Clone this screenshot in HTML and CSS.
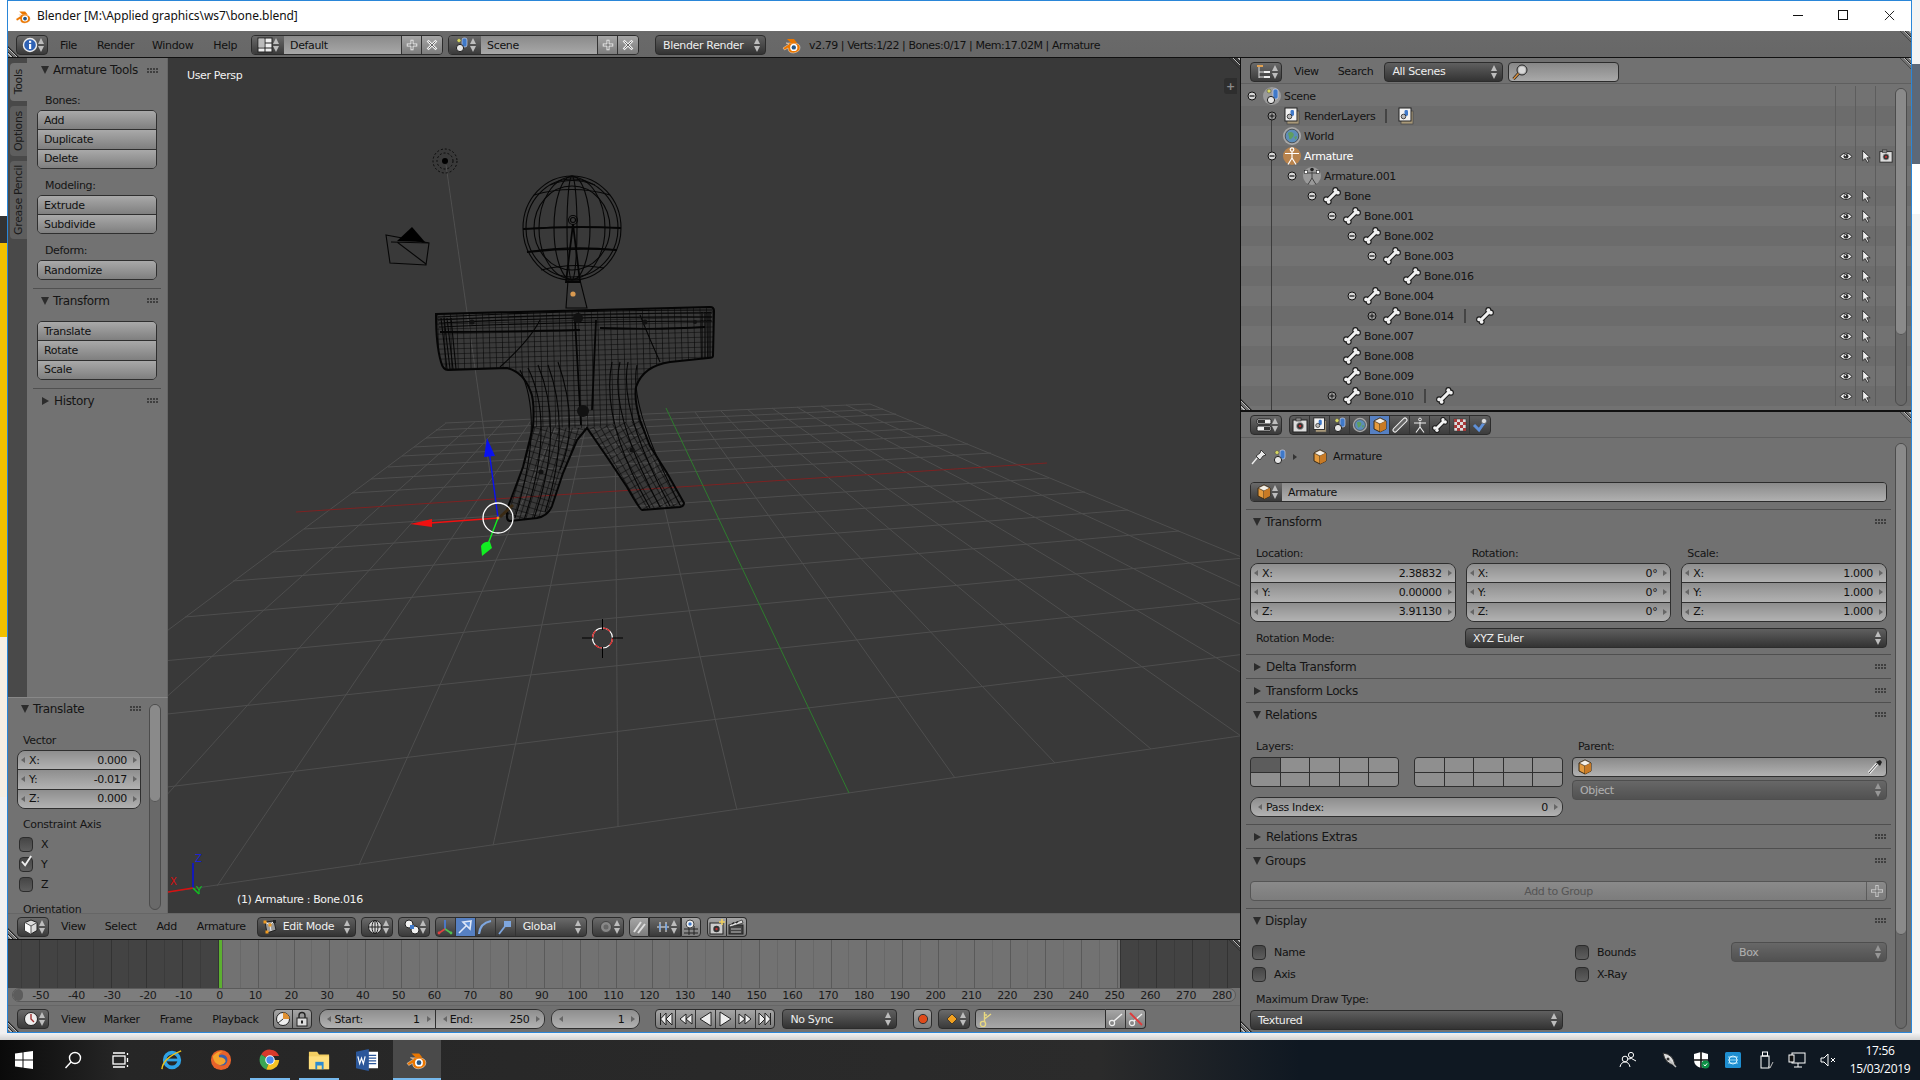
FILE: index.html
```html
<!DOCTYPE html>
<html lang="en">
<head>
<meta charset="utf-8">
<title>Blender</title>
<link rel="stylesheet" href="styles.css">
</head>
<body>
<svg class="defs" width="0" height="0" aria-hidden="true">
<defs>
<symbol id="i-info" viewBox="0 0 16 16"><circle cx="8" cy="8" r="6.5" fill="#2f62b5" stroke="#eee" stroke-width="1.4"/><rect x="7" y="7" width="2.2" height="5" fill="#fff"/><rect x="7" y="3.8" width="2.2" height="2" fill="#fff"/></symbol>
<symbol id="i-layout" viewBox="0 0 16 16"><rect x="1" y="1" width="14" height="14" fill="#eee" stroke="#222"/><path d="M8 1V15M1 11H8M8 6H15M8 11H15" stroke="#222" fill="none"/><rect x="2" y="2" width="5" height="8" fill="#bbb"/></symbol>
<symbol id="i-scene" viewBox="0 0 16 16"><rect x="8" y="1" width="5" height="9" rx="2" fill="#3f79c9" stroke="#dde" stroke-width=".6"/><circle cx="6" cy="11" r="3.6" fill="#e6e6e6" stroke="#222"/><circle cx="5" cy="3.5" r="2" fill="#d8d860" stroke="#444" stroke-width=".5"/></symbol>
<symbol id="i-scene-bg" viewBox="0 0 18 20"><circle cx="9" cy="10" r="9" fill="#9a9a9a"/><rect x="10" y="3" width="5" height="10" rx="2" fill="#3f79c9" stroke="#dde" stroke-width=".6"/><circle cx="8" cy="14" r="3.6" fill="#e6e6e6" stroke="#222"/><circle cx="6" cy="5" r="2" fill="#d8d860" stroke="#444" stroke-width=".5"/></symbol>
<symbol id="i-outliner" viewBox="0 0 16 16"><rect x="1" y="1" width="6" height="2" fill="#e0a050"/><path d="M3 3V14M3 8H8M3 13H8" stroke="#ddd" fill="none"/><rect x="8" y="7" width="6" height="2" fill="#eee"/><rect x="8" y="12" width="6" height="2" fill="#eee"/></symbol>
<symbol id="i-props" viewBox="0 0 16 16"><rect x="1" y="2" width="14" height="5" rx="1.5" fill="#eee" stroke="#222"/><rect x="1" y="9" width="14" height="5" rx="1.5" fill="#eee" stroke="#222"/><rect x="2" y="3" width="7" height="3" fill="#333"/><rect x="8" y="10" width="6" height="3" fill="#333"/></symbol>
<symbol id="i-cube" viewBox="0 0 16 16"><path d="M8 1L14 4V12L8 15L2 12V4Z" fill="#e49a3d" stroke="#3a2a15"/><path d="M8 1L14 4L8 7L2 4Z" fill="#f4efe6" stroke="#3a2a15" stroke-width=".7"/><path d="M8 7V15" stroke="#3a2a15"/><path d="M8 7L14 4V12L8 15Z" fill="#c87a25"/></symbol>
<symbol id="i-edit" viewBox="0 0 16 16"><path d="M3 3L12 2L14 11L5 14Z" fill="#9a9a9a" stroke="#222"/><path d="M3 3L8 6L12 2M8 6L9 12" stroke="#eee" fill="none"/><rect x="1.5" y="1.5" width="3" height="3" fill="#f09a20"/><rect x="6.5" y="4.5" width="3" height="3" fill="#f09a20"/><rect x="11" y="1" width="3" height="3" fill="#222"/><rect x="3.5" y="11.5" width="3" height="3" fill="#f09a20"/></symbol>
<symbol id="i-bone" viewBox="0 0 16 16"><path d="M4 12L12 4" stroke="#1c1c1c" stroke-width="4.6"/><circle cx="2.8" cy="11" r="2.7" fill="#1c1c1c"/><circle cx="5" cy="13.2" r="2.7" fill="#1c1c1c"/><circle cx="11" cy="2.8" r="2.7" fill="#1c1c1c"/><circle cx="13.2" cy="5" r="2.7" fill="#1c1c1c"/><path d="M4 12L12 4" stroke="#f2f2f2" stroke-width="2.8"/><circle cx="2.8" cy="11" r="1.7" fill="#f2f2f2"/><circle cx="5" cy="13.2" r="1.7" fill="#f2f2f2"/><circle cx="11" cy="2.8" r="1.7" fill="#f2f2f2"/><circle cx="13.2" cy="5" r="1.7" fill="#f2f2f2"/></symbol>
<symbol id="i-eye" viewBox="0 0 16 12"><path d="M1 6Q8 -2 15 6Q8 13 1 6Z" fill="#ececec" stroke="#222"/><circle cx="8" cy="5.8" r="2.8" fill="#333"/><circle cx="7.2" cy="4.8" r=".8" fill="#fff"/></symbol>
<symbol id="i-cursor" viewBox="0 0 12 16"><path d="M2 1V13L5 10.5L7.5 15L9.4 14L7 9.5H11Z" fill="#eee" stroke="#222"/></symbol>
<symbol id="i-render" viewBox="0 0 16 16"><rect x="1" y="3" width="14" height="12" fill="#ddd" stroke="#222"/><rect x="4" y="1" width="5" height="3" fill="#888" stroke="#222" stroke-width=".6"/><circle cx="8" cy="9" r="3.5" fill="#333" stroke="#aaa" stroke-width=".8"/><circle cx="8" cy="9" r="1.3" fill="#c03030"/></symbol>
<symbol id="i-rlayers" viewBox="0 0 18 18"><rect x="4" y="4" width="12" height="13" fill="#a89878" stroke="#444" stroke-width=".7"/><rect x="2" y="1" width="12" height="13" fill="#f2f2f2" stroke="#222"/><rect x="7.5" y="3" width="3.5" height="6" rx="1.4" fill="#3f79c9"/><circle cx="6.5" cy="9.5" r="2.3" fill="#bbb" stroke="#222" stroke-width=".8"/></symbol>
<symbol id="i-world" viewBox="0 0 18 20"><circle cx="9" cy="10" r="9" fill="#a8a8a8"/><circle cx="9" cy="10" r="6.8" fill="#5d8db8" stroke="#333" stroke-width=".7"/><path d="M5 7Q8 5 10 7T9 12T6 11ZM11 11L14 10L13 14Z" fill="#5f9e5f"/></symbol>
<symbol id="i-arm-o" viewBox="0 0 18 20"><circle cx="9" cy="10" r="9" fill="#b8834d"/><circle cx="9" cy="3.6" r="1.8" fill="none" stroke="#fff" stroke-width="1.2"/><path d="M2 7.5H16M9 6V12M9 12L5 18.5M9 12L13 18.5" stroke="#fff" stroke-width="1.2" fill="none"/></symbol>
<symbol id="i-arm-d" viewBox="0 0 18 20"><circle cx="9" cy="10" r="9" fill="#999"/><circle cx="9" cy="3.6" r="1.8" fill="#222"/><rect x="1.5" y="4.5" width="3" height="3" fill="#fff" stroke="#222" stroke-width=".6"/><rect x="13.5" y="4.5" width="3" height="3" fill="#fff" stroke="#222" stroke-width=".6"/><path d="M4 7H14M9 6V12M9 12L5 18.5M9 12L13 18.5" stroke="#444" stroke-width="1" fill="none"/></symbol>
<symbol id="i-person" viewBox="0 0 16 16"><circle cx="8" cy="2.5" r="1.4" fill="none" stroke="#eee"/><path d="M2 6H14M8 5V10M8 10L4 15.5M8 10L12 15.5" stroke="#eee" stroke-width="1.1" fill="none"/></symbol>
<symbol id="i-link" viewBox="0 0 16 16"><path d="M3 13L13 3" stroke="#eee" stroke-width="5" stroke-linecap="round"/><path d="M3 13L13 3" stroke="#666" stroke-width="3" stroke-linecap="round"/></symbol>
<symbol id="i-check" viewBox="0 0 16 16"><rect x="2" y="2" width="12" height="12" fill="#ddd" stroke="#333" stroke-width=".6"/><path d="M2 2h3v3h-3zM8 2h3v3h-3zM5 5h3v3h-3zM11 5h3v3h-3zM2 8h3v3h-3zM8 8h3v3h-3zM5 11h3v3h-3zM11 11h3v3h-3z" fill="#a83a3a"/></symbol>
<symbol id="i-mat" viewBox="0 0 16 16"><path d="M2 8L7 13L14 3" stroke="#5f90d8" stroke-width="3" fill="none"/><circle cx="12" cy="4" r="2.6" fill="#ddd" stroke="#333" stroke-width=".5"/></symbol>
<symbol id="i-pin" viewBox="0 0 16 16"><path d="M10 1L15 6L12 7L9 11L5 7L9 4Z" fill="#e8e8e8" stroke="#222" stroke-width=".8"/><path d="M6 9L1 15" stroke="#eee" stroke-width="1.4"/></symbol>
<symbol id="i-drop" viewBox="0 0 16 16"><path d="M2 14L10 5" stroke="#eee" stroke-width="3"/><path d="M2 14L10 5" stroke="#444" stroke-width="1"/><path d="M9 3L13 1L15 3L13 7Z" fill="#222"/></symbol>
<symbol id="i-view3d" viewBox="0 0 16 16"><path d="M8 1L14 3.5V11.5L8 15L2 11.5V3.5Z" fill="#ddd" stroke="#222"/><path d="M8 7V15L2 11.5V3.5Z" fill="#fafafa"/><path d="M2 3.5L8 7L14 3.5M8 7V15" stroke="#555" fill="none"/></symbol>
<symbol id="i-pivot" viewBox="0 0 16 16"><circle cx="8" cy="8" r="6.5" fill="#dcdcdc" stroke="#222"/><path d="M1.5 8H14.5M8 1.5V14.5" stroke="#222"/><ellipse cx="8" cy="8" rx="3" ry="6.5" fill="none" stroke="#222"/></symbol>
<symbol id="i-shade" viewBox="0 0 16 16"><circle cx="5" cy="5" r="4" fill="#f0f0f0" stroke="#222"/><circle cx="11" cy="11" r="4" fill="#f0f0f0" stroke="#222"/><rect x="6" y="6" width="4" height="4" fill="#3f79c9"/></symbol>
<symbol id="i-axes" viewBox="0 0 16 16"><path d="M8 1V10" stroke="#4a80e0" stroke-width="1.6"/><path d="M8 10L2 14" stroke="#e04040" stroke-width="1.6"/><path d="M8 10L14 14" stroke="#50c050" stroke-width="1.6"/><circle cx="2" cy="14" r="1.4" fill="#e04040"/><circle cx="14" cy="14" r="1.4" fill="#50c050"/></symbol>
<symbol id="i-arrow" viewBox="0 0 16 16"><path d="M2 14L10 6M14 2L6 3L13 10Z" stroke="#dfe8f8" stroke-width="1.6" fill="#5f90d8"/></symbol>
<symbol id="i-arc" viewBox="0 0 16 16"><path d="M2 15Q3 4 14 2" stroke="#7ea6de" stroke-width="2.2" fill="none"/></symbol>
<symbol id="i-scale" viewBox="0 0 16 16"><path d="M2 15L9 6" stroke="#7ea6de" stroke-width="1.8"/><rect x="7" y="2" width="7" height="6" fill="#7ea6de"/></symbol>
<symbol id="i-prop" viewBox="0 0 16 16"><circle cx="8" cy="8" r="5.5" fill="#888" stroke="#444"/><circle cx="8" cy="8" r="2.5" fill="#666"/></symbol>
<symbol id="i-magnet" viewBox="0 0 16 16"><path d="M3 13L10 3M7 14L14 5" stroke="#ddd" stroke-width="2"/></symbol>
<symbol id="i-snap" viewBox="0 0 16 16"><path d="M2 8H14M5 3V13M11 3V13" stroke="#eee"/><rect x="4" y="5" width="1.6" height="6" fill="#6fa0e0"/><rect x="10.4" y="5" width="1.6" height="6" fill="#6fa0e0"/></symbol>
<symbol id="i-target" viewBox="0 0 16 16"><path d="M1 10H15M1 14H15M6 7V16M11 7V16" stroke="#222"/><circle cx="7" cy="5" r="4" fill="#eee" stroke="#444"/><circle cx="7" cy="5" r="1.7" fill="#3f79c9"/></symbol>
<symbol id="i-camplus" viewBox="0 0 16 16"><rect x="1" y="4" width="13" height="11" fill="#ccc" stroke="#222"/><circle cx="7.5" cy="10" r="3.2" fill="#333"/><circle cx="7.5" cy="10" r="1.2" fill="#c03030"/><path d="M13 0V6M10 3H16" stroke="#f0d060" stroke-width="1.6"/></symbol>
<symbol id="i-clapper" viewBox="0 0 16 16"><rect x="1" y="6" width="14" height="9" fill="#444" stroke="#222"/><path d="M1 6L14 1L15 4L2 8Z" fill="#ddd" stroke="#222" stroke-width=".7"/><path d="M4 5L6 3.5M8 4L10 2.5" stroke="#222" stroke-width="1.2"/><path d="M3 10H13M3 13H13" stroke="#bbb"/></symbol>
<symbol id="i-clock" viewBox="0 0 16 16"><circle cx="8" cy="8" r="6.5" fill="#eee" stroke="#222"/><path d="M8 3V8L11 11" stroke="#a03030" stroke-width="1.4" fill="none"/></symbol>
<symbol id="i-pie" viewBox="0 0 16 16"><circle cx="8" cy="8" r="6.5" fill="#eee" stroke="#222"/><path d="M8 8V1.5A6.5 6.5 0 0 1 14.5 8Z" fill="#e09030"/><path d="M8 8L3 12" stroke="#333"/></symbol>
<symbol id="i-lock" viewBox="0 0 16 16"><rect x="3" y="7" width="10" height="8" fill="#ddd" stroke="#222"/><path d="M5 7V4.5A3 3 0 0 1 11 4.5V7" fill="none" stroke="#222" stroke-width="1.4"/><rect x="7" y="9.5" width="2" height="3" fill="#222"/></symbol>
<symbol id="i-first" viewBox="0 0 16 16"><path d="M2.5 2V14M14 2L8 8L14 14ZM8 2L2.5 8L8 14Z" fill="#eee" stroke="#222"/></symbol>
<symbol id="i-last" viewBox="0 0 16 16"><path d="M13.5 2V14M2 2L8 8L2 14ZM8 2L13.5 8L8 14Z" fill="#eee" stroke="#222"/></symbol>
<symbol id="i-prev" viewBox="0 0 16 16"><path d="M8 3L2 8L8 13ZM14 3L8 8L14 13Z" fill="#eee" stroke="#222"/></symbol>
<symbol id="i-next" viewBox="0 0 16 16"><path d="M2 3L8 8L2 13ZM8 3L14 8L8 13Z" fill="#eee" stroke="#222"/></symbol>
<symbol id="i-back" viewBox="0 0 16 16"><path d="M13 1V15L2 8Z" fill="#eee" stroke="#222"/></symbol>
<symbol id="i-play" viewBox="0 0 16 16"><path d="M3 1V15L14 8Z" fill="#eee" stroke="#222"/></symbol>
<symbol id="i-rec" viewBox="0 0 16 16"><circle cx="8" cy="8" r="4.6" fill="#e04a1a" stroke="#333"/></symbol>
<symbol id="i-key" viewBox="0 0 16 16"><path d="M8 3L13 8L8 13L3 8Z" fill="#f0a020" stroke="#222" stroke-width=".7"/></symbol>
<symbol id="i-keyset" viewBox="0 0 16 16"><circle cx="4" cy="13" r="2.6" fill="none" stroke="#e8d880" stroke-width="1.4"/><path d="M5.5 11L5.5 1M5.5 4H8M5.5 8L12 3" stroke="#e8d880" stroke-width="1.4" fill="none"/></symbol>
<symbol id="i-keyb" viewBox="0 0 16 16"><circle cx="4" cy="12" r="2.6" fill="none" stroke="#eee" stroke-width="1.2"/><path d="M6 10L14 3" stroke="#eee" stroke-width="1.4"/></symbol>
<symbol id="i-keyx" viewBox="0 0 16 16"><circle cx="4" cy="12" r="2.6" fill="none" stroke="#eee" stroke-width="1.2"/><path d="M6 10L14 3" stroke="#eee" stroke-width="1.4"/><path d="M2 2L14 14" stroke="#e03a3a" stroke-width="1.8"/></symbol>
<symbol id="i-search" viewBox="0 0 16 16"><circle cx="10" cy="6" r="5" fill="#b8b8b8" stroke="#222"/><circle cx="10" cy="6" r="3.2" fill="#d8d8d8"/><path d="M6.5 9.5L1.5 15" stroke="#222" stroke-width="3"/><path d="M6.5 9.5L1.5 15" stroke="#d89040" stroke-width="1.6"/></symbol>
<symbol id="i-plus" viewBox="0 0 16 16"><path d="M8 2V14M2 8H14" stroke="#eee" stroke-width="3.4"/><path d="M8 3V13M3 8H13" stroke="#555" stroke-width="1"/></symbol>
<symbol id="i-x" viewBox="0 0 16 16"><path d="M3 3L13 13M13 3L3 13" stroke="#eee" stroke-width="3.2"/><path d="M4 4L12 12M12 4L4 12" stroke="#555"/></symbol>
<symbol id="i-tick" viewBox="0 0 14 14"><path d="M2 7L5.5 11L12 1" stroke="#eee" stroke-width="2" fill="none"/></symbol>
<symbol id="i-minus-c" viewBox="0 0 10 10"><circle cx="5" cy="5" r="4" fill="#d6d6d6" stroke="#111"/><path d="M2.5 5H7.5" stroke="#111" stroke-width="1.2"/></symbol>
<symbol id="i-plus-c" viewBox="0 0 10 10"><circle cx="5" cy="5" r="4" fill="#999" stroke="#111"/><path d="M2.5 5H7.5M5 2.5V7.5" stroke="#111"/></symbol>
<symbol id="i-blender" viewBox="0 0 20 20"><path d="M1 13L7 9L4 8H11Q18 8 18 12.5T11.5 18Q6 18 6 13L2.5 15Z" fill="#ea7600" stroke="#fff" stroke-width=".4"/><path d="M5 4H12L15 8H9Z" fill="#ea7600"/><circle cx="11.8" cy="12.4" r="3.6" fill="#fff"/><circle cx="11.8" cy="12.4" r="2.2" fill="#265787"/></symbol>
<symbol id="t-win" viewBox="0 0 18 18"><path d="M0 2.5L7.5 1.4V8.5H0ZM8.5 1.3L18 0V8.5H8.5ZM0 9.5H7.5V16.6L0 15.5ZM8.5 9.5H18V18L8.5 16.7Z" fill="#fff"/></symbol>
<symbol id="t-search" viewBox="0 0 18 18"><circle cx="11" cy="7" r="5.5" fill="none" stroke="#fff" stroke-width="1.4"/><path d="M7 11L1.5 17" stroke="#fff" stroke-width="1.4"/></symbol>
<symbol id="t-task" viewBox="0 0 18 18"><rect x="2" y="5" width="12" height="8" fill="none" stroke="#fff" stroke-width="1.3"/><path d="M2 2H14M2 16H14M16.5 2V4M16.5 7V11M16.5 14V16" stroke="#fff" stroke-width="1.3"/></symbol>
<symbol id="t-ie" viewBox="0 0 24 24"><circle cx="12" cy="12" r="8" fill="none" stroke="#2fa3e6" stroke-width="4"/><path d="M6 12H20" stroke="#2fa3e6" stroke-width="3"/><path d="M1 22Q2 10 22 2" fill="none" stroke="#f0c419" stroke-width="1.6"/></symbol>
<symbol id="t-ff" viewBox="0 0 24 24"><circle cx="12" cy="12" r="11" fill="#e8622a"/><circle cx="13" cy="12" r="6" fill="#3b5fa8"/><path d="M3 8Q8 2 14 3Q8 5 10 9Q17 9 17 14Q14 19 9 17Q4 15 3 8Z" fill="#f4a42d"/></symbol>
<symbol id="t-chrome" viewBox="0 0 24 24"><path d="M12 12L2.4 6A11 11 0 0 1 22 7.5H12Z" fill="#d9392c"/><path d="M12 12L2.4 6A11 11 0 0 0 8 22.3L12 12Z" fill="#3aa655"/><path d="M12 12H22A11 11 0 0 1 8 22.3Z" fill="#f6c324"/><circle cx="12" cy="12" r="5.2" fill="#fff"/><circle cx="12" cy="12" r="4" fill="#4a8af0"/></symbol>
<symbol id="t-folder" viewBox="0 0 24 24"><path d="M1 3H10L12 6H23V22H1Z" fill="#f4cf62"/><path d="M1 8H23V22H1Z" fill="#ffdf7d"/><rect x="8" y="14" width="9" height="8" fill="#2d8bd0"/><rect x="10" y="18" width="5" height="4" fill="#ffdf7d"/></symbol>
<symbol id="t-word" viewBox="0 0 24 24"><rect x="11" y="3" width="13" height="18" fill="#fff"/><path d="M13 7H22M13 10H22M13 13H22M13 16H22" stroke="#2b579a" stroke-width="1.4"/><path d="M0 3L14 0V24L0 21Z" fill="#2b579a"/><path d="M2 8L4 16L6 10L8 16L10 8" stroke="#fff" stroke-width="1.3" fill="none"/></symbol>
<symbol id="t-people" viewBox="0 0 18 18"><circle cx="6" cy="8" r="2.8" fill="none" stroke="#fff"/><path d="M1 16Q2 11 6 11T11 16" fill="none" stroke="#fff"/><circle cx="12" cy="4" r="2.6" fill="none" stroke="#fff"/><path d="M9 8Q12 6 17 10" fill="none" stroke="#fff"/></symbol>
<symbol id="t-sat" viewBox="0 0 18 18"><path d="M3 2Q13 3 15 14Q5 13 3 2Z" fill="#ddd" stroke="#333"/><path d="M9 9L16 16" stroke="#bbb" stroke-width="1.5"/><circle cx="8" cy="8" r="1.5" fill="#333"/></symbol>
<symbol id="t-shield" viewBox="0 0 18 18"><path d="M2 3L9 1L16 3V9Q16 15 9 17Q2 15 2 9Z" fill="#fff"/><path d="M9 1V17M2 9H16" stroke="#111" stroke-width="1.6"/><circle cx="13.5" cy="13.5" r="4" fill="#0d9146"/><path d="M11.8 13.5L13 15L15.2 12.4" stroke="#fff" fill="none"/></symbol>
<symbol id="t-intel" viewBox="0 0 18 18"><rect x="1" y="1" width="16" height="16" rx="1.5" fill="#1e8ed0"/><path d="M4 6H14M4 9H14M4 12H14" stroke="#9adcf6"/><circle cx="9" cy="9" r="4" fill="none" stroke="#d8f2ff"/></symbol>
<symbol id="t-usb" viewBox="0 0 18 18"><rect x="5" y="5" width="8" height="12" fill="none" stroke="#fff"/><rect x="6.5" y="1" width="5" height="4" fill="none" stroke="#fff"/><path d="M12 15L14 17L17 11" stroke="#bbb" fill="none"/></symbol>
<symbol id="t-net" viewBox="0 0 18 18"><rect x="4" y="2" width="13" height="10" fill="none" stroke="#fff"/><rect x="1" y="4" width="5" height="7" fill="#111" stroke="#fff"/><path d="M10 12V16M6 16H14" stroke="#fff"/></symbol>
<symbol id="t-vol" viewBox="0 0 18 18"><path d="M1 7H4L8 3V15L4 11H1Z" fill="none" stroke="#fff"/><path d="M11 7L15 11M15 7L11 11" stroke="#fff"/></symbol>
<pattern id="mesh-a" width="6.4" height="5" patternUnits="userSpaceOnUse" patternTransform="rotate(-1.5)"><path d="M0 0H6.4M0 0V5" stroke="#050505" stroke-width="1.15" fill="none"/></pattern>
<pattern id="mesh-b" width="6" height="6" patternUnits="userSpaceOnUse" patternTransform="rotate(17)"><path d="M0 0H6M0 0V6" stroke="#050505" stroke-width="1.15" fill="none"/></pattern>
<pattern id="mesh-c" width="6" height="6" patternUnits="userSpaceOnUse" patternTransform="rotate(-30)"><path d="M0 0H6M0 0V6" stroke="#050505" stroke-width="1.15" fill="none"/></pattern>
<clipPath id="clip-top"><path d="M436 314L710 307Q714 307 714 311L713 356Q713 358 708 358L670 362Q643 366 636 387Q634 400 640 420L587 428L533 427Q535 400 530 390Q523 372 507 368L448 370Q443 370 441 362Q436 345 436 314Z"/></clipPath>
</defs>
</svg>

<div class="screen">
  <div class="desk-row">
    <div class="strip-left"><i class="sl-a"></i><i class="sl-b"></i><i class="sl-c"></i><i class="sl-d"></i><i class="sl-e"></i></div>
    <div class="window">
      <div class="titlebar">
        <svg class="tb-logo"><use href="#i-blender"/></svg>
        <span class="tb-text">Blender [M:\Applied graphics\ws7\bone.blend]</span>
        <span class="wc wc-min"></span><span class="wc wc-max"></span>
        <svg class="wc-close" viewBox="0 0 12 12"><path d="M1 1L11 11M11 1L1 11" stroke="#111" fill="none"/></svg>
      </div>

      <div class="hdr info-hdr">
        <i class="hatch hatch-bl"></i><i class="hatch hatch-tr"></i>
        <div class="edbtn"><svg class="ic"><use href="#i-info"/></svg><b class="ud"></b></div>
        <span class="menu m-first">File</span><span class="menu m-render">Render</span><span class="menu m-window">Window</span><span class="menu m-help">Help</span>
        <div class="idgroup g-layout"><div class="id-ic"><svg class="ic"><use href="#i-layout"/></svg><b class="ud"></b></div><div class="id-name">Default</div><div class="id-btn"><svg class="ic-s"><use href="#i-plus"/></svg></div><div class="id-btn"><svg class="ic-s"><use href="#i-x"/></svg></div></div>
        <div class="idgroup g-scene"><div class="id-ic"><svg class="ic"><use href="#i-scene"/></svg><b class="ud"></b></div><div class="id-name">Scene</div><div class="id-btn"><svg class="ic-s"><use href="#i-plus"/></svg></div><div class="id-btn"><svg class="ic-s"><use href="#i-x"/></svg></div></div>
        <div class="drop d-engine">Blender Render<b class="ud"></b></div>
        <svg class="ic-logo"><use href="#i-blender"/></svg>
        <span class="stats">v2.79 | Verts:1/22 | Bones:0/17 | Mem:17.02M | Armature</span>
      </div>

      <div class="main">
        <div class="col-left">
          <div class="v3d">
            <div class="side">
              <div class="side-top">
                <div class="tabs">
                  <div class="tab tab-tools"><span>Tools</span></div>
                  <div class="tab tab-options"><span>Options</span></div>
                  <div class="tab tab-gp"><span>Grease Pencil</span></div>
                </div>
                <div class="tools">
                  <div class="phead ph-first"><i class="tri-d"></i><span>Armature Tools</span><i class="grip"></i></div>
                  <div class="lbl lbl-first">Bones:</div>
                  <div class="btngroup g3"><div class="btn">Add</div><div class="btn">Duplicate</div><div class="btn">Delete</div></div>
                  <div class="lbl lbl-next">Modeling:</div>
                  <div class="btngroup g2"><div class="btn">Extrude</div><div class="btn">Subdivide</div></div>
                  <div class="lbl lbl-next">Deform:</div>
                  <div class="btngroup g1"><div class="btn">Randomize</div></div>
                  <div class="sep sep-tool"></div>
                  <div class="phead"><i class="tri-d"></i><span>Transform</span><i class="grip"></i></div>
                  <div class="btngroup g3 bg-tr"><div class="btn">Translate</div><div class="btn">Rotate</div><div class="btn">Scale</div></div>
                  <div class="sep sep-tool"></div>
                  <div class="phead"><i class="tri-r"></i><span>History</span><i class="grip"></i></div>
                </div>
              </div>
              <div class="redo">
                <div class="phead ph-redo"><i class="tri-d"></i><span>Translate</span><i class="grip"></i></div>
                <div class="lbl lbl-vec">Vector</div>
                <div class="numgroup ng-redo">
                  <div class="num"><i class="al"></i><span>X:</span><em>0.000</em><i class="ar"></i></div>
                  <div class="num"><i class="al"></i><span>Y:</span><em>-0.017</em><i class="ar"></i></div>
                  <div class="num"><i class="al"></i><span>Z:</span><em>0.000</em><i class="ar"></i></div>
                </div>
                <div class="lbl lbl-ca">Constraint Axis</div>
                <div class="chk chk-redo"><i class="box"></i>X</div>
                <div class="chk chk-redo"><i class="box"><svg class="tick"><use href="#i-tick"/></svg></i>Y</div>
                <div class="chk chk-redo"><i class="box"></i>Z</div>
                <div class="lbl lbl-or">Orientation</div>
                <div class="sbar sbar-redo"><i></i></div>
              </div>
            </div>

            <div class="viewport">
              <svg class="scene3d" viewBox="168 58 1072 855" width="1072" height="855">
                <path class="g-line" d="M-271 957L445.5 423.5M-97 932L474.8 422M65 908L503.5 421M217 886L532 419M359 865L560 418M493 845.5L588 417M618 827L615 415.5M737 810L642 414M955 778L695 412M1055 763L721 411M1151 749L747 409M1241 736L772 408M1327 724L797 407M1409 712L821 406M1487 700L846 405M1562 689L870 404M-270 956L1562 689M-84 818L1424 632M37 728L1322 590M121 665L1244 558M185 617L1179 531M233 581L1128 510M273 552L1085 492M304 529L1049 478M352 493L991 453M371 479L968 444M388 467L947 435M402 456L929 428M414 447L912 421M426 438L896 414M436 430L883 409M445 423L870 404"/>
                <path class="g-red" d="M296 512L1047 463"/>
                <path class="g-green" d="M849 793L666 408"/>
                <path class="lamp-line" d="M446 165L490 473"/>
                <circle class="lamp-d" cx="445" cy="161" r="12"/><circle class="lamp-d" cx="445" cy="161" r="8"/><circle cx="445" cy="161" r="3" fill="#000"/>
                <path class="wire" d="M386 235L429 243L426 265L390 263ZM391 242L429 243M397 242L426 264"/>
                <path d="M397 241L412 227L425 242Z" fill="#000"/>
                <g class="wire">
                  <ellipse cx="572" cy="228" rx="49" ry="52"/><ellipse cx="572" cy="228" rx="46" ry="49"/><ellipse cx="572" cy="228" rx="38" ry="42"/>
                  <ellipse cx="572" cy="228" rx="33" ry="51"/><ellipse cx="572" cy="228" rx="18" ry="52"/><ellipse cx="572" cy="228" rx="5" ry="52"/>
                  <path d="M534 195Q572 184 610 195M523 229Q572 225 621 228M527 252Q572 245 617 250M541 270Q572 262 604 268M550 185Q572 176 595 185"/>
                  <path class="wire-b" d="M523 229Q572 226 621 228M527 252Q572 247 617 250"/>
                  <circle cx="573" cy="220" r="4.5"/><circle cx="573" cy="220" r="2.5"/>
                  <path class="wire-b" d="M573 224L566 282H580Z"/>
                  <path d="M568 280L566 308H587L580 280Z"/>
                </g>
                <circle cx="573" cy="294" r="2.6" fill="#d99a50"/>
                <g clip-path="url(#clip-top)"><rect x="430" y="300" width="290" height="135" fill="url(#mesh-a)"/></g>
                <path d="M533 427L587 428L577 440L563 473L552 506Q548 516 537 518L510 521Q505 521 508 507L523 467Z" fill="url(#mesh-b)"/>
                <path d="M587 428L640 420L650 446L667 473L684 503Q684 506 680 507L642 510Q640 510 627 487L607 457Z" fill="url(#mesh-c)"/>
                <path class="mesh-line" d="M436 314L710 307Q714 307 714 311L713 356Q713 358 708 358L670 362Q643 366 636 387Q634 400 640 420L650 446L667 473L684 503Q684 506 680 507L642 510Q640 510 627 487L607 457L587 428L577 440L563 473L552 506Q548 516 537 518L510 521Q505 521 508 507L523 467L533 427Q535 400 530 390Q523 372 507 368L448 370Q443 370 441 362Q436 345 436 314Z"/>
                <path class="wire" d="M438 317Q575 310 712 310M438 320Q575 313 712 313M439 323Q575 316 712 317M439 327Q575 321 712 321M441 318L447 369M444 318L450 369M447 318L453 369M451 318L456 369M702 312V359M705 312V359M708 312V358M710 312V358M520 370Q545 420 515 518M528 368Q556 425 524 520M538 365Q565 430 534 518M548 365Q572 430 545 512M558 362Q580 425 560 470M612 362Q600 420 650 508M620 362Q608 410 660 507M628 362Q618 410 670 506M637 365Q628 405 680 505M500 367Q530 340 540 320M660 362Q650 340 640 315"/>
                <path class="wire-b" d="M440 332Q500 332 580 330M600 328Q660 330 705 327M575 320L581 425M596 320L592 410"/>
                <circle cx="578" cy="318" r="5" fill="#111"/><circle cx="583" cy="411" r="6" fill="#111"/><circle cx="541" cy="472" r="2.5" fill="#111"/><circle cx="632" cy="450" r="2.5" fill="#111"/><circle cx="472" cy="322" r="2.5" fill="#111"/><circle cx="645" cy="322" r="2.5" fill="#111"/><circle cx="695" cy="322" r="2" fill="#111"/>
                <path class="bone-sel" d="M500 517L513 505"/>
                <path class="giz-b" d="M498 518L489 450"/><path d="M487 438L484 457L495 456Z" fill="#0a12f0"/>
                <path class="giz-r" d="M498 518L430 523"/><path d="M410 524L432 519V527Z" fill="#f01010"/>
                <path class="giz-g" d="M498 518L488 544"/><path d="M482 556L481 546Q484 541 490 542L492 548Z" fill="#12ee22"/>
                <circle class="giz-c" cx="498" cy="518" r="15"/><circle cx="498" cy="518" r="1.4" fill="#f09020"/>
                <circle class="cur-a" cx="602.5" cy="638" r="10"/><circle class="cur-b" cx="602.5" cy="638" r="10"/>
                <path class="cur-c" d="M582 638H593M612 638H623M602.5 619V630M602.5 647V658"/>
                <path class="ax-z" d="M193 888V863"/><path class="ax-x" d="M193 888L168 892"/><path class="ax-y" d="M193 888L199 894"/>
                <text class="ax-t ax-tz" x="195" y="862">Z</text><text class="ax-t ax-tx" x="170" y="885">X</text><text class="ax-t ax-ty" x="196" y="894">Y</text>
              </svg>
              <span class="vp-top">User Persp</span>
              <span class="vp-bot">(1) Armature : Bone.016</span>
              <span class="vp-plus">+</span>
              <i class="hatch hatch-tr"></i>
            </div>
          </div>

          <div class="hdr hdr-3d">
            <i class="hatch hatch-bl"></i>
            <div class="edbtn"><svg class="ic"><use href="#i-view3d"/></svg><b class="ud"></b></div>
            <span class="menu m-first">View</span><span class="menu m-select">Select</span><span class="menu m-add">Add</span><span class="menu m-arm">Armature</span>
            <div class="drop d-mode"><svg class="ic mode-ic"><use href="#i-edit"/></svg>Edit Mode<b class="ud"></b></div>
            <div class="edbtn e-shade"><svg class="ic"><use href="#i-pivot"/></svg><b class="ud"></b></div>
            <div class="edbtn e-pivot"><svg class="ic"><use href="#i-shade"/></svg><b class="ud"></b></div>
            <div class="manip">
              <div class="m-ic"><svg class="ic"><use href="#i-axes"/></svg></div>
              <div class="m-ic m-on"><svg class="ic"><use href="#i-arrow"/></svg></div>
              <div class="m-ic"><svg class="ic"><use href="#i-arc"/></svg></div>
              <div class="m-ic"><svg class="ic"><use href="#i-scale"/></svg></div>
              <div class="m-drop">Global<b class="ud"></b></div>
            </div>
            <div class="edbtn e-prop"><svg class="ic"><use href="#i-prop"/></svg><b class="ud"></b></div>
            <div class="lightbtn l-magnet"><svg class="ic"><use href="#i-magnet"/></svg></div>
            <div class="edbtn e-snap"><svg class="ic"><use href="#i-snap"/></svg><b class="ud"></b></div>
            <div class="lightbtn l-target"><svg class="ic"><use href="#i-target"/></svg></div>
            <div class="lightbtn l-rend"><svg class="ic"><use href="#i-camplus"/></svg></div>
            <div class="lightbtn l-clap"><svg class="ic"><use href="#i-clapper"/></svg></div>
          </div>

          <div class="timeline">
            <div class="tl-graph">
              <i class="hatch hatch-tr"></i>
              <div class="tl-dark tl-dl"></div>
              <div class="tl-mid"></div>
              <div class="tl-dark tl-dr"></div>
            </div>
            <div class="tl-ruler">
              <i class="ru-knob"></i>
              <div class="ru-labels"><span>-50</span><span>-40</span><span>-30</span><span>-20</span><span>-10</span><span>0</span><span>10</span><span>20</span><span>30</span><span>40</span><span>50</span><span>60</span><span>70</span><span>80</span><span>90</span><span>100</span><span>110</span><span>120</span><span>130</span><span>140</span><span>150</span><span>160</span><span>170</span><span>180</span><span>190</span><span>200</span><span>210</span><span>220</span><span>230</span><span>240</span><span>250</span><span>260</span><span>270</span><span>280</span></div>
            </div>
            <div class="hdr hdr-tl">
              <i class="hatch hatch-bl"></i>
              <div class="edbtn"><svg class="ic"><use href="#i-clock"/></svg><b class="ud"></b></div>
              <span class="menu m-first">View</span><span class="menu m-marker">Marker</span><span class="menu m-frame">Frame</span><span class="menu m-play">Playback</span>
              <div class="lightgroup lg-time"><div class="lg-c"><svg class="ic"><use href="#i-pie"/></svg></div><div class="lg-c"><svg class="ic"><use href="#i-lock"/></svg></div></div>
              <div class="numrow nr-range">
                <div class="num"><i class="al"></i><span>Start:</span><em>1</em><i class="ar"></i></div>
                <div class="num"><i class="al"></i><span>End:</span><em>250</em><i class="ar"></i></div>
              </div>
              <div class="numrow nr-cur"><div class="num"><i class="al"></i><span></span><em>1</em><i class="ar"></i></div></div>
              <div class="lightgroup lg-play">
                <div class="lg-c"><svg class="ic"><use href="#i-first"/></svg></div><div class="lg-c"><svg class="ic"><use href="#i-prev"/></svg></div><div class="lg-c"><svg class="ic"><use href="#i-back"/></svg></div><div class="lg-c"><svg class="ic"><use href="#i-play"/></svg></div><div class="lg-c"><svg class="ic"><use href="#i-next"/></svg></div><div class="lg-c"><svg class="ic"><use href="#i-last"/></svg></div>
              </div>
              <div class="drop d-sync">No Sync<b class="ud"></b></div>
              <div class="lightgroup lg-rec"><div class="lg-c"><svg class="ic"><use href="#i-rec"/></svg></div></div>
              <div class="edbtn e-key"><svg class="ic"><use href="#i-key"/></svg><b class="ud"></b></div>
              <div class="keyfield"><svg class="ic"><use href="#i-keyset"/></svg></div>
              <div class="lightgroup lg-keys"><div class="lg-c"><svg class="ic"><use href="#i-keyb"/></svg></div><div class="lg-c"><svg class="ic"><use href="#i-keyx"/></svg></div></div>
            </div>
          </div>
        </div>

        <div class="col-right">
          <div class="outliner">
            <div class="hdr hdr-out">
              <i class="hatch hatch-tr"></i>
              <div class="edbtn"><svg class="ic"><use href="#i-outliner"/></svg><b class="ud"></b></div>
              <span class="menu m-first">View</span><span class="menu m-search">Search</span>
              <div class="drop d-all">All Scenes<b class="ud"></b></div>
              <div class="searchf"><svg class="ic"><use href="#i-search"/></svg></div>
            </div>
            <div class="tree">
              <i class="tree-line"></i>
              <div class="row l0"><svg class="exp"><use href="#i-minus-c"/></svg><svg class="ric"><use href="#i-scene-bg"/></svg><span>Scene</span><div class="cols"><i></i><i></i><i></i></div></div>
              <div class="row l1"><svg class="exp"><use href="#i-plus-c"/></svg><svg class="ric"><use href="#i-rlayers"/></svg><span>RenderLayers</span><b class="bar"></b><svg class="ric"><use href="#i-rlayers"/></svg><div class="cols"><i></i><i></i><i></i></div></div>
              <div class="row l1"><i class="exp"></i><svg class="ric"><use href="#i-world"/></svg><span>World</span><div class="cols"><i></i><i></i><i></i></div></div>
              <div class="row l1 active"><svg class="exp"><use href="#i-minus-c"/></svg><svg class="ric"><use href="#i-arm-o"/></svg><span>Armature</span><div class="cols"><i><svg class="eye"><use href="#i-eye"/></svg></i><i><svg class="cur"><use href="#i-cursor"/></svg></i><i><svg class="ren"><use href="#i-render"/></svg></i></div></div>
              <div class="row l2"><svg class="exp"><use href="#i-minus-c"/></svg><svg class="ric"><use href="#i-arm-d"/></svg><span>Armature.001</span><div class="cols"><i></i><i></i><i></i></div></div>
              <div class="row l3"><svg class="exp"><use href="#i-minus-c"/></svg><svg class="ric"><use href="#i-bone"/></svg><span>Bone</span><div class="cols"><i><svg class="eye"><use href="#i-eye"/></svg></i><i><svg class="cur"><use href="#i-cursor"/></svg></i><i></i></div></div>
              <div class="row l4"><svg class="exp"><use href="#i-minus-c"/></svg><svg class="ric"><use href="#i-bone"/></svg><span>Bone.001</span><div class="cols"><i><svg class="eye"><use href="#i-eye"/></svg></i><i><svg class="cur"><use href="#i-cursor"/></svg></i><i></i></div></div>
              <div class="row l5"><svg class="exp"><use href="#i-minus-c"/></svg><svg class="ric"><use href="#i-bone"/></svg><span>Bone.002</span><div class="cols"><i><svg class="eye"><use href="#i-eye"/></svg></i><i><svg class="cur"><use href="#i-cursor"/></svg></i><i></i></div></div>
              <div class="row l6"><svg class="exp"><use href="#i-minus-c"/></svg><svg class="ric"><use href="#i-bone"/></svg><span>Bone.003</span><div class="cols"><i><svg class="eye"><use href="#i-eye"/></svg></i><i><svg class="cur"><use href="#i-cursor"/></svg></i><i></i></div></div>
              <div class="row l7"><i class="exp"></i><svg class="ric"><use href="#i-bone"/></svg><span>Bone.016</span><div class="cols"><i><svg class="eye"><use href="#i-eye"/></svg></i><i><svg class="cur"><use href="#i-cursor"/></svg></i><i></i></div></div>
              <div class="row l5"><svg class="exp"><use href="#i-minus-c"/></svg><svg class="ric"><use href="#i-bone"/></svg><span>Bone.004</span><div class="cols"><i><svg class="eye"><use href="#i-eye"/></svg></i><i><svg class="cur"><use href="#i-cursor"/></svg></i><i></i></div></div>
              <div class="row l6"><svg class="exp"><use href="#i-plus-c"/></svg><svg class="ric"><use href="#i-bone"/></svg><span>Bone.014</span><b class="bar"></b><svg class="ric"><use href="#i-bone"/></svg><div class="cols"><i><svg class="eye"><use href="#i-eye"/></svg></i><i><svg class="cur"><use href="#i-cursor"/></svg></i><i></i></div></div>
              <div class="row l4"><i class="exp"></i><svg class="ric"><use href="#i-bone"/></svg><span>Bone.007</span><div class="cols"><i><svg class="eye"><use href="#i-eye"/></svg></i><i><svg class="cur"><use href="#i-cursor"/></svg></i><i></i></div></div>
              <div class="row l4"><i class="exp"></i><svg class="ric"><use href="#i-bone"/></svg><span>Bone.008</span><div class="cols"><i><svg class="eye"><use href="#i-eye"/></svg></i><i><svg class="cur"><use href="#i-cursor"/></svg></i><i></i></div></div>
              <div class="row l4"><i class="exp"></i><svg class="ric"><use href="#i-bone"/></svg><span>Bone.009</span><div class="cols"><i><svg class="eye"><use href="#i-eye"/></svg></i><i><svg class="cur"><use href="#i-cursor"/></svg></i><i></i></div></div>
              <div class="row l4"><svg class="exp"><use href="#i-plus-c"/></svg><svg class="ric"><use href="#i-bone"/></svg><span>Bone.010</span><b class="bar"></b><svg class="ric"><use href="#i-bone"/></svg><div class="cols"><i><svg class="eye"><use href="#i-eye"/></svg></i><i><svg class="cur"><use href="#i-cursor"/></svg></i><i></i></div></div>
              <div class="sbar sbar-out"><i></i></div>
              <i class="hatch hatch-bl"></i>
            </div>
          </div>

          <div class="props">
            <div class="hdr hdr-props">
              <i class="hatch hatch-tr"></i>
              <div class="edbtn"><svg class="ic"><use href="#i-props"/></svg><b class="ud"></b></div>
              <div class="ctx">
                <div><svg class="ic"><use href="#i-render"/></svg></div><div><svg class="ic"><use href="#i-rlayers"/></svg></div><div><svg class="ic"><use href="#i-scene"/></svg></div><div><svg class="ic"><use href="#i-world"/></svg></div><div class="on"><svg class="ic"><use href="#i-cube"/></svg></div><div><svg class="ic"><use href="#i-link"/></svg></div><div><svg class="ic"><use href="#i-person"/></svg></div><div><svg class="ic"><use href="#i-bone"/></svg></div><div><svg class="ic"><use href="#i-check"/></svg></div><div><svg class="ic"><use href="#i-mat"/></svg></div>
              </div>
            </div>
            <div class="pbody">
              <div class="crumb"><svg class="ic"><use href="#i-pin"/></svg><svg class="ic cr-s"><use href="#i-scene"/></svg><i class="cr-arrow"></i><svg class="ic cr-c"><use href="#i-cube"/></svg><span>Armature</span></div>
              <div class="namefield"><div class="nf-ic"><svg class="ic"><use href="#i-cube"/></svg><b class="ud"></b></div><div class="nf-t">Armature</div></div>
              <div class="psep"></div>
              <div class="phead pp"><i class="tri-d"></i><span>Transform</span><i class="grip"></i></div>
              <div class="pb-tr">
                <div class="tr-col"><div class="lbl">Location:</div><div class="numgroup">
                  <div class="num"><i class="al"></i><span>X:</span><em>2.38832</em><i class="ar"></i></div>
                  <div class="num"><i class="al"></i><span>Y:</span><em>0.00000</em><i class="ar"></i></div>
                  <div class="num"><i class="al"></i><span>Z:</span><em>3.91130</em><i class="ar"></i></div></div></div>
                <div class="tr-col"><div class="lbl">Rotation:</div><div class="numgroup">
                  <div class="num"><i class="al"></i><span>X:</span><em>0°</em><i class="ar"></i></div>
                  <div class="num"><i class="al"></i><span>Y:</span><em>0°</em><i class="ar"></i></div>
                  <div class="num"><i class="al"></i><span>Z:</span><em>0°</em><i class="ar"></i></div></div></div>
                <div class="tr-col"><div class="lbl">Scale:</div><div class="numgroup">
                  <div class="num"><i class="al"></i><span>X:</span><em>1.000</em><i class="ar"></i></div>
                  <div class="num"><i class="al"></i><span>Y:</span><em>1.000</em><i class="ar"></i></div>
                  <div class="num"><i class="al"></i><span>Z:</span><em>1.000</em><i class="ar"></i></div></div></div>
              </div>
              <div class="rotmode"><div class="lbl rm-l">Rotation Mode:</div><div class="drop d-rot">XYZ Euler<b class="ud"></b></div></div>
              <div class="psep"></div>
              <div class="phead pp"><i class="tri-r"></i><span>Delta Transform</span><i class="grip"></i></div>
              <div class="psep"></div>
              <div class="phead pp"><i class="tri-r"></i><span>Transform Locks</span><i class="grip"></i></div>
              <div class="psep"></div>
              <div class="phead pp"><i class="tri-d"></i><span>Relations</span><i class="grip"></i></div>
              <div class="pb-rel">
                <div class="rel-l">
                  <div class="lbl">Layers:</div>
                  <div class="layers"><div class="lay-grid"><i class="lay-on"></i><i></i><i></i><i></i><i></i><i></i><i></i><i></i><i></i><i></i></div><div class="lay-grid"><i></i><i></i><i></i><i></i><i></i><i></i><i></i><i></i><i></i><i></i></div></div>
                  <div class="numrow nr-pass"><div class="num"><i class="al"></i><span>Pass Index:</span><em>0</em><i class="ar"></i></div></div>
                </div>
                <div class="rel-r">
                  <div class="lbl">Parent:</div>
                  <div class="parentf"><svg class="ic"><use href="#i-cube"/></svg><svg class="ic pf-drop"><use href="#i-drop"/></svg></div>
                  <div class="drop d-obj">Object<b class="ud"></b></div>
                </div>
              </div>
              <div class="psep"></div>
              <div class="phead pp"><i class="tri-r"></i><span>Relations Extras</span><i class="grip"></i></div>
              <div class="psep"></div>
              <div class="phead pp"><i class="tri-d"></i><span>Groups</span><i class="grip"></i></div>
              <div class="pb-grp"><div class="addgrp"><div class="ag-t">Add to Group</div><div class="ag-p"><svg class="ic"><use href="#i-plus"/></svg></div></div></div>
              <div class="psep"></div>
              <div class="phead pp"><i class="tri-d"></i><span>Display</span><i class="grip"></i></div>
              <div class="pb-disp">
                <div class="disp-row r1"><div class="chk chk-n"><i class="box"></i>Name</div><div class="chk chk-b"><i class="box"></i>Bounds</div><div class="drop d-box">Box<b class="ud"></b></div></div>
                <div class="disp-row r2"><div class="chk chk-n"><i class="box"></i>Axis</div><div class="chk chk-b"><i class="box"></i>X-Ray</div></div>
                <div class="lbl lbl-max">Maximum Draw Type:</div>
                <div class="drop d-tex">Textured<b class="ud"></b></div>
              </div>
              <div class="sbar sbar-props"><i></i></div>
              <i class="hatch hatch-bl"></i>
            </div>
          </div>
        </div>
      </div>
    </div>
    <div class="strip-right"><i class="sr-a"></i><i class="sr-b"></i><i class="sr-c"></i><i class="sr-d"></i></div>
  </div>
  <div class="under"></div>
  <div class="taskbar">
    <svg class="tk t1"><use href="#t-win"/></svg>
    <svg class="tk t2"><use href="#t-search"/></svg>
    <svg class="tk t3"><use href="#t-task"/></svg>
    <div class="tapp a-ie"><svg class="tk-a"><use href="#t-ie"/></svg></div>
    <div class="tapp a-ff"><svg class="tk-a"><use href="#t-ff"/></svg></div>
    <div class="tapp a-ch run"><svg class="tk-a"><use href="#t-chrome"/></svg></div>
    <div class="tapp a-fo run"><svg class="tk-a"><use href="#t-folder"/></svg></div>
    <div class="tapp a-wo"><svg class="tk-a"><use href="#t-word"/></svg></div>
    <div class="tapp a-bl run sel"><svg class="tk-a"><use href="#i-blender"/></svg></div>
    <div class="tray">
      <svg class="tr"><use href="#t-people"/></svg><svg class="tr tr-sat"><use href="#t-sat"/></svg><svg class="tr"><use href="#t-shield"/></svg><svg class="tr"><use href="#t-intel"/></svg><svg class="tr"><use href="#t-usb"/></svg><svg class="tr"><use href="#t-net"/></svg><svg class="tr tr-vol"><use href="#t-vol"/></svg>
      <div class="clock"><span>17:56</span><span>15/03/2019</span></div>
    </div>
  </div>
</div>
</body>
</html>
```

FILE: styles.css
```css
* { box-sizing: border-box; }
html, body { margin: 0; padding: 0; }
body { width: 1920px; height: 1080px; overflow: hidden; background: #222; font: 11px/1 "DejaVu Sans", sans-serif; letter-spacing: -.35px; color: #111; }
.defs { position: absolute; }
i, b, em { font-style: normal; font-weight: normal; }

.screen { width: 1920px; height: 1080px; display: flex; flex-direction: column; }
.desk-row { display: flex; height: 1033px; flex: none; }
.strip-left { width: 7px; display: flex; flex-direction: column; background: #f4f4f4; }
.strip-left i { display: block; }
.sl-a { height: 216px; background: #fff; }
.sl-b { height: 27px; background: #333; }
.sl-c { height: 394px; background: #f2c100; }
.sl-d { height: 160px; background: #f6efe4; }
.sl-e { flex: 1; background: #f1f1f1; }
.strip-right { width: 8px; display: flex; flex-direction: column; }
.strip-right i { display: block; }
.sr-a { height: 64px; background: #f3f3f3; }
.sr-b { height: 100px; background: #5c6878; }
.sr-c { height: 50px; background: #fff; }
.sr-d { flex: 1; background: #f4f4f4; }
.under { height: 7px; flex: none; background: linear-gradient(#f2f2f2, #d2d2d2); }

.window { width: 1905px; height: 1033px; border: 1px solid #2a86d8; display: flex; flex-direction: column; background: #727272; }
.titlebar { height: 30px; flex: none; background: #fff; display: flex; align-items: center; position: relative; font-family: "Noto Sans", sans-serif; font-size: 12px; letter-spacing: -.05px; color: #111; }
.tb-logo { width: 17px; height: 17px; margin-left: 7px; }
.tb-text { margin-left: 5px; }
.wc { position: absolute; }
.wc-min { left: 1785px; top: 14px; width: 10px; height: 1px; background: #111; }
.wc-max { left: 1830px; top: 9px; width: 10px; height: 10px; border: 1px solid #111; }
.wc-close { position: absolute; left: 1876px; top: 9px; width: 11px; height: 11px; }

.hdr { display: flex; align-items: center; flex: none; position: relative; background: #6e6e6e; padding-left: 8px; }
.info-hdr { height: 27px; padding-top: 2px; border-bottom: 1px solid #111; background: linear-gradient(#6a6a6a, #676767); }
.hdr-3d { height: 27px; padding-left: 9px; border-top: 1px solid #666; border-bottom: 1px solid #111; background: #707070; }
.hdr-tl { height: 27px; padding-left: 9px; background: #707070; }
.hdr-out { height: 26px; padding-left: 9px; padding-top: 2px; background: #717171; border-bottom: 1px solid #5f5f5f; }
.hdr-props { height: 26px; padding-left: 9px; background: #717171; border-bottom: 1px solid #5f5f5f; }

.ic { width: 16px; height: 16px; flex: none; display: block; }
.ic-s { width: 14px; height: 14px; display: block; }
.ud { width: 7px; height: 14px; flex: none; margin-left: auto; position: relative; display: block; }
.ud::before, .ud::after { content: ""; position: absolute; left: 0; border-left: 3.5px solid transparent; border-right: 3.5px solid transparent; }
.ud::before { top: 0; border-bottom: 6px solid #bdbdbd; }
.ud::after { bottom: 0; border-top: 6px solid #bdbdbd; }

.edbtn { width: 32px; height: 20px; flex: none; border-radius: 4px; border: 1px solid #2c2c2c; background: linear-gradient(#6a6a6a, #3a3a3a); display: flex; align-items: center; padding: 0 4px 0 5px; }
.menu { flex: none; white-space: nowrap; color: #111; }
.m-first { margin-left: 12px; }
.m-render { margin-left: 20px; }
.m-window { margin-left: 18px; }
.m-help { margin-left: 20px; }
.m-select { margin-left: 19px; }
.m-add { margin-left: 20px; }
.m-arm { margin-left: 20px; }
.m-marker { margin-left: 18px; }
.m-frame { margin-left: 20px; }
.m-play { margin-left: 20px; }
.m-search { margin-left: 19px; }

.idgroup { height: 20px; flex: none; display: flex; border: 1px solid #2c2c2c; border-radius: 4px; overflow: hidden; }
.g-layout { margin-left: 14px; width: 192px; }
.g-scene { margin-left: 5px; width: 191px; }
.id-ic { width: 32px; flex: none; background: linear-gradient(#6a6a6a, #3a3a3a); display: flex; align-items: center; padding: 0 4px 0 5px; }
.id-name { flex: 1; background: linear-gradient(#8a8a8a, #a8a8a8); display: flex; align-items: center; padding-left: 6px; border-right: 1px solid #333; }
.id-btn { width: 20px; flex: none; background: linear-gradient(#a5a5a5, #7c7c7c); display: flex; align-items: center; justify-content: center; border-right: 1px solid #333; }
.id-btn:last-child { border-right: 0; }

.drop { height: 20px; flex: none; display: flex; align-items: center; border: 1px solid #2c2c2c; border-radius: 4px; background: linear-gradient(#5f5f5f, #333); color: #eee; padding: 0 4px 0 7px; }
.d-engine { width: 111px; margin-left: 16px; }
.ic-logo { width: 20px; height: 20px; flex: none; margin-left: 16px; }
.stats { margin-left: 7px; white-space: nowrap; color: #111; letter-spacing: -.45px; }
.d-mode { width: 99px; margin-left: 11px; padding-left: 4px; }
.mode-ic { margin-right: 5px; }
.e-shade { margin-left: 5px; }
.e-pivot { margin-left: 5px; }
.manip { width: 152px; height: 20px; margin-left: 5px; flex: none; display: flex; border: 1px solid #2c2c2c; border-radius: 4px; overflow: hidden; background: linear-gradient(#6a6a6a, #3a3a3a); }
.m-ic { width: 20px; flex: none; display: flex; align-items: center; justify-content: center; border-right: 1px solid #333; }
.m-on { background: #5680c2; }
.m-drop { flex: 1; display: flex; align-items: center; color: #eee; padding: 0 4px 0 7px; }
.e-prop { margin-left: 5px; }
.lightbtn { height: 20px; width: 20px; flex: none; display: flex; align-items: center; justify-content: center; border: 1px solid #2c2c2c; background: linear-gradient(#a5a5a5, #7c7c7c); }
.l-magnet { margin-left: 5px; border-radius: 4px 0 0 4px; }
.e-snap { margin-left: 0; border-radius: 0; }
.l-target { margin-left: 0; border-radius: 0 4px 4px 0; }
.l-rend { margin-left: 6px; border-radius: 4px 0 0 4px; }
.l-clap { border-left: 0; border-radius: 0 4px 4px 0; }
.lightgroup { height: 20px; flex: none; display: flex; border: 1px solid #2c2c2c; border-radius: 4px; overflow: hidden; background: linear-gradient(#a5a5a5, #7c7c7c); }
.lg-c { flex: 1; display: flex; align-items: center; justify-content: center; border-right: 1px solid #333; }
.lg-c:last-child { border-right: 0; }
.lg-time { width: 39px; margin-left: 15px; }
.lg-play { width: 120px; margin-left: 15px; }
.d-sync { width: 115px; margin-left: 7px; }
.lg-rec { width: 19px; margin-left: 16px; }
.e-key { margin-left: 6px; }
.keyfield { width: 131px; height: 20px; margin-left: 5px; flex: none; display: flex; align-items: center; padding-left: 3px; border: 1px solid #2c2c2c; border-radius: 4px 0 0 4px; background: linear-gradient(#8a8a8a, #a8a8a8); }
.lg-keys { width: 40px; border-left: 0; border-radius: 0 4px 4px 0; }
.d-all { width: 119px; margin-left: 11px; }
.searchf { width: 111px; height: 20px; margin-left: 5px; flex: none; display: flex; align-items: center; padding-left: 3px; border: 1px solid #2c2c2c; border-radius: 4px; background: linear-gradient(#878787, #a9a9a9); }

.hatch { position: absolute; width: 11px; height: 11px; background: repeating-linear-gradient(45deg, transparent 0 2px, #bbb 2px 3px, #222 3px 4px); z-index: 3; }
.hatch-bl { left: 0; bottom: 0; clip-path: polygon(0 0, 100% 100%, 0 100%); }
.hatch-tr { right: 0; top: 0; clip-path: polygon(0 0, 100% 0, 100% 100%); }

.main { display: flex; flex: 1; min-height: 0; }
.col-left { width: 1233px; flex: none; display: flex; flex-direction: column; border-right: 1px solid #111; }
.col-right { flex: 1; display: flex; flex-direction: column; min-width: 0; }

.v3d { display: flex; height: 855px; flex: none; }
.side { width: 160px; flex: none; display: flex; flex-direction: column; }
.side-top { display: flex; height: 639px; flex: none; }
.tabs { width: 19px; flex: none; background: #494949; display: flex; flex-direction: column; align-items: flex-end; padding-top: 5px; }
.tab { width: 17px; display: flex; align-items: center; justify-content: center; border-radius: 4px 0 0 4px; background: #5e5e5e; margin-bottom: 5px; }
.tab span { writing-mode: vertical-rl; transform: rotate(180deg); white-space: nowrap; color: #1a1a1a; }
.tab-tools { height: 38px; background: #727272; }
.tab-options { height: 50px; }
.tab-gp { height: 78px; }
.tools { width: 141px; flex: none; background: #727272; border-right: 1px solid #666; padding: 0 10px; }

.phead { height: 23px; display: flex; align-items: center; font-size: 12px; color: #151515; flex: none; }
.phead span { margin-left: 4px; }
.ph-first { height: 24px; }
.tools .phead { margin-left: 4px; }
.tri-d { width: 0; height: 0; flex: none; border-left: 4px solid transparent; border-right: 4px solid transparent; border-top: 8px solid #2c2c2c; }
.tri-r { width: 0; height: 0; flex: none; margin: 0 1px; border-top: 4px solid transparent; border-bottom: 4px solid transparent; border-left: 7px solid #2c2c2c; }
.grip { width: 11px; height: 5px; margin-left: auto; flex: none; background-image: radial-gradient(circle at 1px 1px, #3f3f3f .9px, transparent 1px); background-size: 3px 3px; }
.tools .grip { margin-right: -1px; }
.lbl { height: 18px; display: flex; align-items: center; padding-left: 8px; color: #151515; flex: none; white-space: nowrap; }
.lbl-first { margin-top: 9px; margin-bottom: 1px; }
.lbl-next { margin-top: 7px; margin-bottom: 1px; }
.btngroup { border: 1px solid #2f2f2f; border-radius: 5px; overflow: hidden; display: flex; flex-direction: column; }
.g3 { height: 59px; }
.g2 { height: 39px; }
.g1 { height: 20px; }
.btn { flex: 1; display: flex; align-items: center; padding-left: 6px; background: linear-gradient(#a9a9a9, #7f7f7f); border-bottom: 1px solid #2f2f2f; color: #111; }
.btn:last-child { border-bottom: 0; }
.sep { height: 1px; background: #505050; flex: none; }
.sep-tool { margin: 8px -4px 0; }
.bg-tr { margin-top: 9px; }

.redo { flex: 1; min-height: 0; background: #727272; border-top: 1px solid #888; border-right: 1px solid #666; position: relative; overflow: hidden; padding-left: 9px; }
.ph-redo { height: 21px; width: 122px; margin-left: 4px; }
.ph-redo .grip { margin-right: 2px; }
.lbl-vec { margin-top: 12px; padding-left: 6px; margin-bottom: 1px; }
.numgroup { border: 1px solid #2f2f2f; border-radius: 8px; overflow: hidden; height: 59px; display: flex; flex-direction: column; }
.ng-redo { width: 124px; }
.num { flex: 1; display: flex; align-items: center; padding: 0 3px; background: linear-gradient(#8e8e8e, #b2b2b2); border-bottom: 1px solid #2f2f2f; color: #111; min-width: 0; }
.num:last-child { border-bottom: 0; }
.num span { margin-left: 4px; white-space: nowrap; }
.num em { margin-left: auto; margin-right: 6px; white-space: nowrap; }
.al, .ar { width: 0; height: 0; flex: none; border-top: 3.5px solid transparent; border-bottom: 3.5px solid transparent; }
.al { border-right: 4px solid #666; }
.ar { border-left: 4px solid #666; }
.lbl-ca { margin-top: 6px; padding-left: 6px; margin-bottom: 1px; }
.chk { display: flex; align-items: center; color: #111; white-space: nowrap; flex: none; }
.box { width: 14px; height: 15px; flex: none; border: 1px solid #2c2c2c; border-radius: 4px; background: linear-gradient(#454545, #5e5e5e); margin-right: 8px; display: block; position: relative; }
.chk-redo { height: 20.3px; padding-left: 2px; }
.tick { position: absolute; left: 0; top: -3px; width: 13px; height: 13px; }
.lbl-or { margin-top: 6px; padding-left: 6px; }
.sbar { position: absolute; width: 12px; border-radius: 6px; border: 1px solid #4c4c4c; background: #696969; z-index: 2; }
.sbar i { display: block; border-radius: 6px; background: #8a8a8a; border-bottom: 1px solid #555; }
.sbar-redo { left: 141px; top: 6px; height: 206px; }
.sbar-redo i { height: 97px; }
.sbar-out { right: 4px; top: 4px; height: 318px; }
.sbar-out i { height: 246px; }
.sbar-props { right: 4px; top: 5px; height: 586px; }
.sbar-props i { height: 491px; }

.viewport { flex: 1; background: #393939; position: relative; overflow: hidden; }
.scene3d { display: block; }
.g-line { stroke: #4e4e4e; stroke-width: 1; fill: none; }
.g-red { stroke: #7d2222; stroke-width: 1; fill: none; }
.g-green { stroke: #2e7d2e; stroke-width: 1; fill: none; }
.lamp-line { stroke: #4f4f4f; fill: none; }
.lamp-d { stroke: #0a0a0a; fill: none; stroke-dasharray: 2 2; }
.wire { stroke: #060606; fill: none; stroke-width: 1.1; }
.wire-b { stroke: #050505; fill: none; stroke-width: 1.8; }
.mesh-line { stroke: #050505; fill: none; stroke-width: 2; }
.bone-sel { stroke: #3a2a14; stroke-width: 3; fill: none; }
.giz-b { stroke: #0a12f0; fill: none; stroke-width: 1.4; }
.giz-r { stroke: #f01010; fill: none; stroke-width: 1.4; }
.giz-g { stroke: #12ee22; fill: none; stroke-width: 1.4; }
.giz-c { stroke: #fff; fill: none; stroke-width: 1.3; }
.cur-a { stroke: #fff; fill: none; stroke-width: 1.2; }
.cur-b { stroke: #d82020; fill: none; stroke-width: 1.2; stroke-dasharray: 8 7.7; }
.cur-c { stroke: #000; fill: none; }
.ax-z { stroke: #0a12d8; fill: none; stroke-width: 1.6; }
.ax-x { stroke: #d81010; fill: none; stroke-width: 1.6; }
.ax-y { stroke: #10c020; fill: none; stroke-width: 1.6; }
.ax-t { font-size: 10px; letter-spacing: 0; }
.ax-tz { fill: #1a22d8; }
.ax-tx { fill: #d81010; }
.ax-ty { fill: #10c020; }
.vp-top { position: absolute; left: 19px; top: 12px; color: #f2f2f2; }
.vp-bot { position: absolute; left: 69px; top: 836px; color: #f2f2f2; white-space: nowrap; }
.vp-plus { position: absolute; right: 3px; top: 20px; width: 13px; height: 16px; border-radius: 3px 0 0 3px; background: #2e2e2e; color: #8a8a8a; font-weight: bold; display: flex; align-items: center; justify-content: center; }

.timeline { flex: 1; display: flex; flex-direction: column; min-height: 0; }
.tl-graph { height: 48px; flex: none; display: flex; position: relative; }
.tl-dark { background-color: #434343; background-image: repeating-linear-gradient(to left, #333 0 1px, transparent 1px 17.9px, #3b3b3b 17.9px 18.9px, transparent 18.9px 35.8px); }
.tl-dl { width: 211px; flex: none; }
.tl-mid { width: 901px; flex: none; border-left: 3px solid #5cb030; background-color: #727272; background-image: repeating-linear-gradient(90deg, #5a5a5a 0 1px, transparent 1px 17.9px, #686868 17.9px 18.9px, transparent 18.9px 35.8px); }
.tl-dr { flex: 1; background-image: repeating-linear-gradient(90deg, #333 0 1px, transparent 1px 17.9px, #3b3b3b 17.9px 18.9px, transparent 18.9px 35.8px); }
.tl-ruler { height: 14px; flex: none; margin: 0 4px; border: 1px solid #5a5a5a; border-radius: 7px; background: #7d7d7d; position: relative; overflow: hidden; display: flex; align-items: center; color: #1a1a1a; }
.ru-knob { position: absolute; left: 0; top: 0; width: 10px; height: 12px; border-radius: 6px; background: #5c5c5c; }
.ru-labels { display: flex; padding-left: 9.7px; flex: none; }
.ru-labels span { width: 35.8px; flex: none; text-align: center; }
.tl-ruler + .hdr { margin-top: 3px; border-top: 1px solid #666; }
.numrow { display: flex; height: 20px; flex: none; border: 1px solid #2f2f2f; border-radius: 9px; overflow: hidden; }
.nr-range { width: 226px; margin-left: 7px; }
.nr-cur { width: 89px; margin-left: 6px; }
.numrow .num { border-bottom: 0; border-right: 1px solid #2f2f2f; padding: 0 4px 0 7px; }
.numrow .num:last-child { border-right: 0; }
.nr-range .num:first-child { flex: 116; }
.nr-range .num:last-child { flex: 110; }
.nr-range .num span { margin-left: 3px; }
.nr-range .num em, .nr-cur .num em { margin-right: 7px; }

.outliner { height: 354px; flex: none; border-bottom: 2px solid #111; display: flex; flex-direction: column; overflow: hidden; }
.tree { flex: 1; position: relative; background: #727272; overflow: hidden; padding-top: 2px; }
.tree-line { position: absolute; left: 30px; top: 31px; width: 1px; bottom: 0; background: #3c3c3c; z-index: 1; }
.row { height: 20px; display: flex; align-items: center; position: relative; color: #141414; }
.row:nth-of-type(even) { background: #6c6c6c; }
.row > span { margin-left: 3px; white-space: nowrap; }
.exp { width: 10px; height: 10px; flex: none; display: block; margin-right: 6px; position: relative; z-index: 2; }
.ric { width: 18px; height: 20px; flex: none; display: block; position: relative; z-index: 2; }
.bar { width: 2px; height: 14px; background: #444; margin: 0 10px; flex: none; }
.active > span { color: #fff; }
.l0 { padding-left: 6px; }
.l1 { padding-left: 26px; }
.l2 { padding-left: 46px; }
.l3 { padding-left: 66px; }
.l4 { padding-left: 86px; }
.l5 { padding-left: 106px; }
.l6 { padding-left: 126px; }
.l7 { padding-left: 146px; }
.cols { position: absolute; left: 594px; top: 0; height: 20px; display: flex; }
.cols i { width: 20px; height: 20px; border-left: 1px solid #5d5d5d; display: flex; align-items: center; justify-content: center; }
.eye { width: 14px; height: 11px; }
.cur { width: 10px; height: 15px; }
.ren { width: 14px; height: 14px; }

.props { flex: 1; display: flex; flex-direction: column; min-height: 0; }
.ctx { display: flex; margin-left: 7px; height: 20px; border: 1px solid #2c2c2c; border-radius: 4px; overflow: hidden; background: linear-gradient(#5f5f5f, #3c3c3c); }
.ctx div { width: 20px; display: flex; align-items: center; justify-content: center; border-right: 1px solid #333; }
.ctx div:last-child { border-right: 0; }
.ctx .on { background: #5680c2; }
.pbody { flex: 1; position: relative; padding: 0 24px 0 9px; background: #717171; overflow: hidden; min-height: 0; }
.crumb { height: 37px; display: flex; align-items: center; padding-left: 1px; color: #111; }
.cr-s { margin-left: 5px; }
.cr-arrow { width: 0; height: 0; margin-left: 5px; border-top: 3px solid transparent; border-bottom: 3px solid transparent; border-left: 4px solid #333; }
.cr-c { margin-left: 15px; }
.crumb span { margin-left: 5px; }
.namefield { height: 20px; margin-top: 7px; display: flex; border: 1px solid #2c2c2c; border-radius: 4px; overflow: hidden; }
.nf-ic { width: 31px; flex: none; background: linear-gradient(#6a6a6a, #3a3a3a); display: flex; align-items: center; padding: 0 4px 0 5px; }
.nf-t { flex: 1; display: flex; align-items: center; padding-left: 6px; background: linear-gradient(#8a8a8a, #b0b0b0); }
.psep { height: 1px; margin: 7px -4px 0; background: #4f4f4f; }
.phead.pp { margin-left: 3px; margin-right: 1px; }
.phead + .psep { margin-top: 0; }
.pb-tr { display: flex; gap: 10px; padding-top: 12px; }
.tr-col { flex: 1; min-width: 0; }
.tr-col .lbl { height: 18px; padding-left: 6px; padding-bottom: 2px; }
.rotmode { display: flex; margin-top: 6px; height: 20px; margin-bottom: -1px; }
.rm-l { height: 20px; width: 215px; padding-left: 6px; }
.d-rot { flex: 1; }
.pb-rel { display: flex; gap: 9px; padding-top: 12px; }
.rel-l { width: 313px; flex: none; }
.rel-r { flex: 1; min-width: 0; }
.rel-l .lbl, .rel-r .lbl { margin-bottom: 1px; padding-left: 6px; padding-bottom: 2px; }
.layers { display: flex; justify-content: space-between; height: 30px; }
.lay-grid { width: 149px; display: grid; grid-template-columns: repeat(5, 1fr); grid-template-rows: repeat(2, 1fr); gap: 1px; background: #2f2f2f; border: 1px solid #2f2f2f; border-radius: 4px; overflow: hidden; }
.lay-grid i { background: #8f8f8f; display: block; }
.lay-grid .lay-on { background: #5c5c5c; }
.nr-pass { width: 313px; margin-top: 10px; }
.parentf { height: 20px; display: flex; align-items: center; justify-content: space-between; padding: 0 3px 0 4px; border: 1px solid #2f2f2f; border-radius: 4px; background: linear-gradient(#8a8a8a, #b2b2b2); }
.d-obj { width: 100%; margin-top: 3px; opacity: .5; }
.pb-grp { padding-top: 9px; }
.addgrp { height: 20px; display: flex; border: 1px solid #555; border-radius: 4px; overflow: hidden; color: #555; background: linear-gradient(#8a8a8a, #7c7c7c); }
.ag-t { flex: 1; display: flex; align-items: center; justify-content: center; }
.ag-p { width: 20px; flex: none; display: flex; align-items: center; justify-content: center; border-left: 1px solid #444; opacity: .6; }
.pb-disp { padding-top: 10px; }
.disp-row { height: 20px; display: flex; align-items: center; }
.r2 { margin-top: 2px; }
.chk-n { width: 323px; padding-left: 2px; }
.chk-b { width: 158px; padding-left: 2px; }
.d-box { flex: 1; opacity: .5; }
.lbl-max { margin-top: 6px; margin-bottom: 2px; padding-left: 6px; }
.d-tex { width: 313px; }

.taskbar { height: 40px; flex: none; position: relative; display: flex; align-items: center; background: linear-gradient(90deg, #0a0a0a 0, #262626 120px, #2b2b2b 1100px, #0f1822 1300px, #0f1822 100%); }
.tk { width: 18px; height: 18px; flex: none; }
.t1 { margin-left: 15px; }
.t2 { margin-left: 31px; }
.t3 { margin-left: 29px; }
.tapp { height: 40px; width: 40px; flex: none; display: flex; align-items: center; justify-content: center; position: relative; }
.a-ie { margin-left: 23px; }
.a-ff { margin-left: 9px; }
.a-ch { margin-left: 9px; }
.a-fo { margin-left: 9px; }
.a-wo { margin-left: 8px; }
.a-bl { margin-left: 6px; width: 48px; }
.tk-a { width: 22px; height: 24px; }
.run::after { content: ""; position: absolute; left: 0; right: 0; bottom: 0; height: 2px; background: #76b9ed; }
.sel { background: #4a4a4a; }
.tray { margin-left: auto; display: flex; align-items: center; height: 40px; padding-right: 5px; gap: 14px; }
.tr { width: 18px; height: 18px; flex: none; }
.tr-sat { margin-left: 9px; }
.clock { width: 70px; display: flex; flex-direction: column; align-items: center; gap: 6px; font: 12px/1 "Open Sans", sans-serif; letter-spacing: -.3px; color: #fff; margin-left: -7px; }
```
